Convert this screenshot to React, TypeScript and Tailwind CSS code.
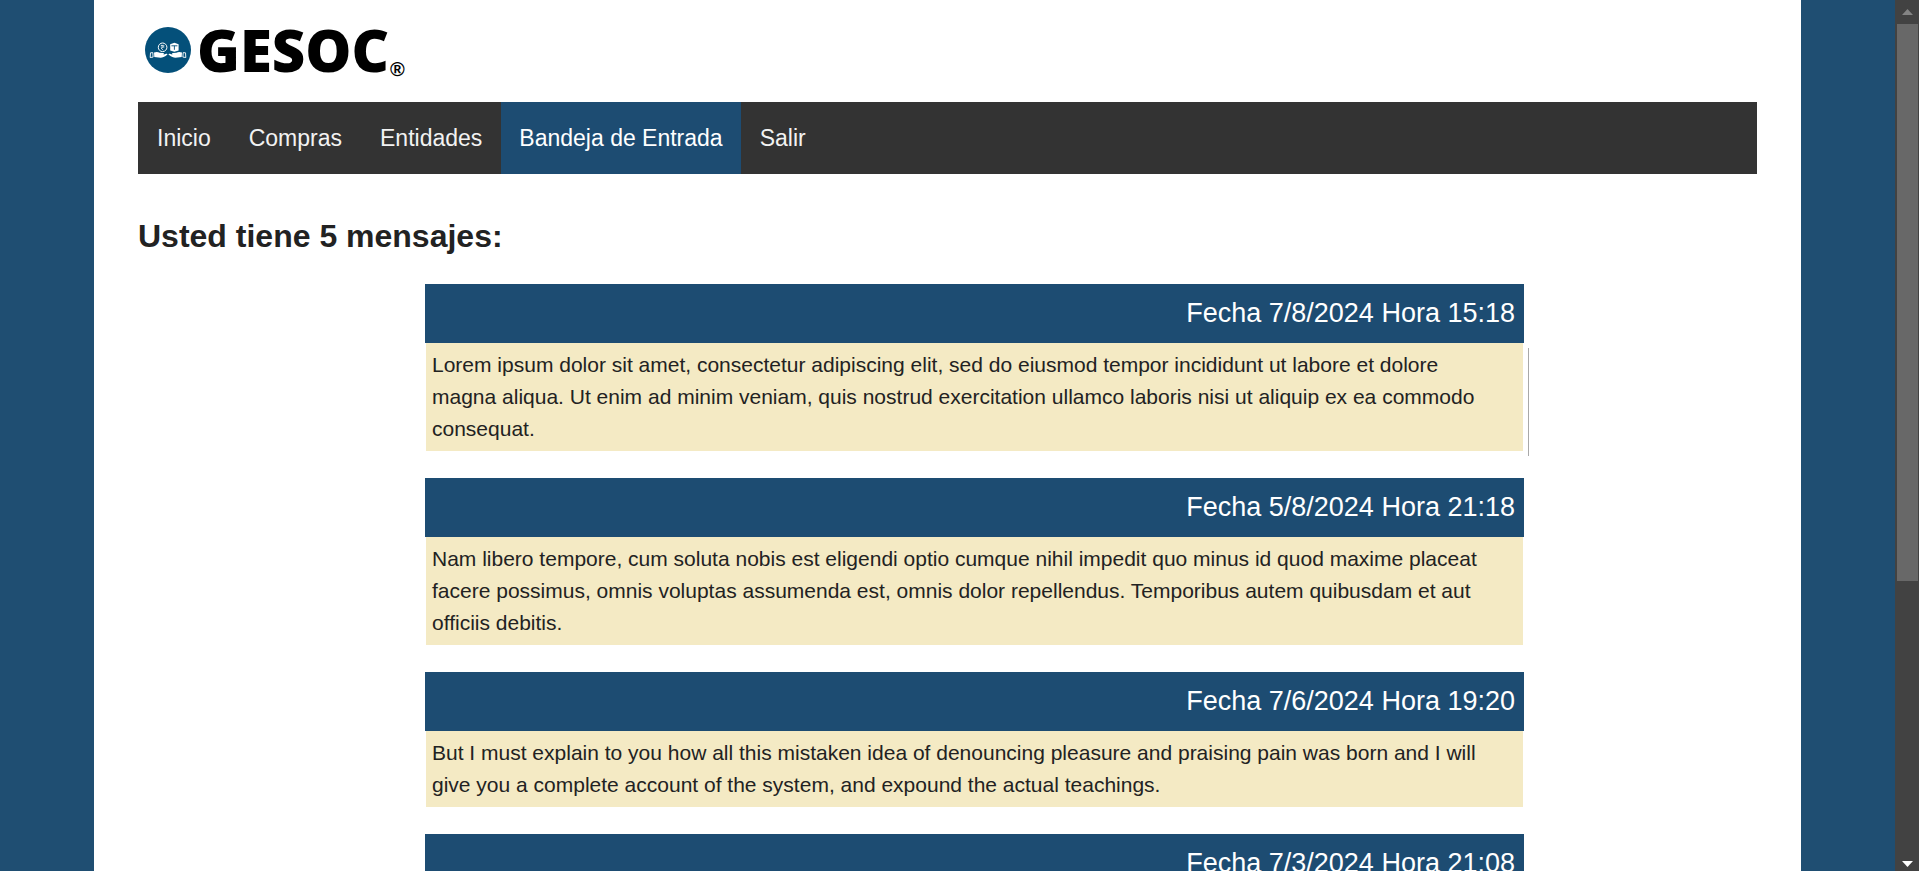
import React from "react";

interface Message {
  date: string;
  time: string;
  body: string;
}

const messages: Message[] = [
  {
    date: "7/8/2024",
    time: "15:18",
    body: "Lorem ipsum dolor sit amet, consectetur adipiscing elit, sed do eiusmod tempor incididunt ut labore et dolore magna aliqua. Ut enim ad minim veniam, quis nostrud exercitation ullamco laboris nisi ut aliquip ex ea commodo consequat.",
  },
  {
    date: "5/8/2024",
    time: "21:18",
    body: "Nam libero tempore, cum soluta nobis est eligendi optio cumque nihil impedit quo minus id quod maxime placeat facere possimus, omnis voluptas assumenda est, omnis dolor repellendus. Temporibus autem quibusdam et aut officiis debitis.",
  },
  {
    date: "7/6/2024",
    time: "19:20",
    body: "But I must explain to you how all this mistaken idea of denouncing pleasure and praising pain was born and I will give you a complete account of the system, and expound the actual teachings.",
  },
  {
    date: "7/3/2024",
    time: "21:08",
    body: "",
  },
];

const links = ["Inicio", "Compras", "Entidades", "Bandeja de Entrada", "Salir"];
const activeLink = "Bandeja de Entrada";

function Hand() {
  return (
    <g>
      <path d="M5.500 25.800l2.300-.2.300 4.500-2.900.4z" fill="none" stroke="#fff" strokeWidth="0.9" />
      <path
        d="M9 25.400c2.200-.8 4.200-.7 5.600.4l3.400.3c1.300.2 1.300 1.400.2 1.600l3-1c1.200-.3 1.600.8.700 1.400-2.300 1.700-4.400 2.700-6.300 2.700L9.300 30z"
        fill="#fff"
      />
    </g>
  );
}

function Emblem() {
  return (
    <svg viewBox="0 0 46 46" className="size-[46px] shrink-0" aria-hidden="true">
      <circle cx="23" cy="23" r="23" fill="#04507a" />
      <circle cx="17.600" cy="20.300" r="4.300" fill="none" stroke="#fff" strokeWidth="1" />
      <path
        d="M15.800 18.400h3.600M15.800 20h3.600M16.200 18.400c2.700 0 2.700 2.700-.2 2.700l2.200 2"
        fill="none"
        stroke="#fff"
        strokeWidth="0.7"
      />
      <path d="M25.200 17.300l4.200-1.500 4.200 1.500v6.200l-4.200 1.300-4.200-1.300z" fill="#fff" />
      <path d="M26.400 18.800h6M29.400 18.800v4" fill="none" stroke="#04507a" strokeWidth="0.9" />
      <Hand />
      <g transform="translate(46 0) scale(-1 1)">
        <Hand />
      </g>
    </svg>
  );
}

function Logo() {
  return (
    <a href="#inicio" className="flex h-[102px] items-start pl-[7px] pt-[27px] text-black">
      <Emblem />
      <span className="ml-[6px] mr-px font-['Open_Sans','Noto_Sans',sans-serif] text-[58px] font-extrabold leading-[46px]">
        GESOC
      </span>
      <span className="pt-8 text-[20px] font-bold leading-5">®</span>
    </a>
  );
}

function NavBar() {
  return (
    <nav className="flex flex-wrap bg-[#333333]">
      {links.map((label) => (
        <a
          key={label}
          href={"#" + label.toLowerCase().replace(/ /g, "-")}
          aria-current={label === activeLink ? "page" : undefined}
          className={
            label === activeLink
              ? "bg-[#1d4c72] px-[18px] py-[18px] text-[23px] leading-9 text-white"
              : "px-[19px] py-[18px] text-[23px] leading-9 text-[#f2f2f2]"
          }
        >
          {label}
        </a>
      ))}
    </nav>
  );
}

function MessageCard({ message, marked }: { message: Message; marked: boolean }) {
  return (
    <li className="mx-auto w-full max-w-[1099px]">
      <h3 className="bg-[#1d4c72] px-[9px] pb-3 pt-[11px] text-right text-[27px] leading-9 text-white">
        Fecha {message.date} Hora {message.time}
      </h3>
      <div className="relative mx-px bg-[#f4eac4] py-[6px] pl-[6px] pr-9">
        <p className="min-h-8 text-[21px] leading-8">{message.body}</p>
        {marked && <span className="absolute -right-[6px] top-[5px] h-full w-px bg-[#a9a9a9]" />}
      </div>
    </li>
  );
}

function ScrollRail() {
  return (
    <div className="flex w-6 shrink-0 flex-col bg-[#424242] pl-[2px] pr-px" aria-hidden="true">
      <svg viewBox="0 0 21 24" className="h-6 w-full shrink-0">
        <path d="M5 15L10.500 9L16 15z" fill="#848484" />
      </svg>
      <div className="flex grow flex-col">
        <div className="h-[67.7%] bg-[#686868]" />
      </div>
      <svg viewBox="0 0 21 24" className="h-6 w-full shrink-0">
        <path d="M5 14L10.500 20L16 14z" fill="#ffffff" />
      </svg>
    </div>
  );
}

export default function App() {
  return (
    <div className="flex h-screen bg-[#1f4e72] font-['Liberation_Sans',Arial,sans-serif] text-[#222222]">
      <div className="grow overflow-y-auto px-[94px] [scrollbar-width:none]">
        <main className="min-h-full bg-white px-11 pb-12">
          <Logo />
          <NavBar />
          <h1 className="mb-6 mt-[38px] text-[32px] font-bold leading-[48px]">
            Usted tiene 5 mensajes:
          </h1>
          <ul className="flex flex-col gap-[27px] pl-[54px]">
            {messages.map((message, index) => (
              <MessageCard key={message.date} message={message} marked={index === 0} />
            ))}
          </ul>
        </main>
      </div>
      <ScrollRail />
    </div>
  );
}
